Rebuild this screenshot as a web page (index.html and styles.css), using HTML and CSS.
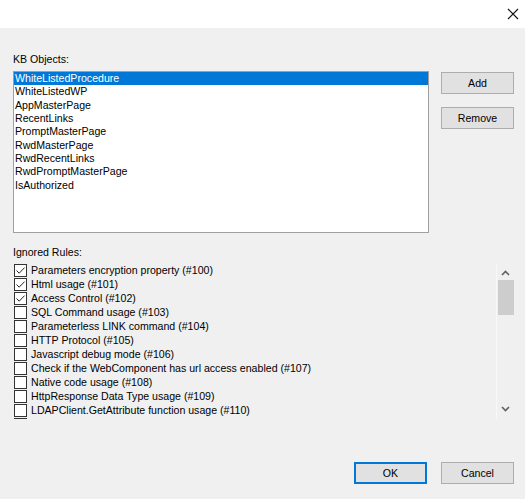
FILE: index.html
```html
<!DOCTYPE html>
<html>
<head>
<meta charset="utf-8">
<link rel="stylesheet" href="styles.css">
</head>
<body>
<div class="window">
  <div class="titlebar">
    <svg class="close" width="12" height="12" viewBox="0 0 12 12"><path d="M1 1L11 11M11 1L1 11" stroke="#111" stroke-width="1.1" fill="none"/></svg>
  </div>
  <div class="content">
    <div class="label kb-label">KB Objects:</div>
    <div class="kb-row">
      <div class="listbox">
        <div class="item selected">WhiteListedProcedure</div>
        <div class="item">WhiteListedWP</div>
        <div class="item">AppMasterPage</div>
        <div class="item">RecentLinks</div>
        <div class="item">PromptMasterPage</div>
        <div class="item">RwdMasterPage</div>
        <div class="item">RwdRecentLinks</div>
        <div class="item">RwdPromptMasterPage</div>
        <div class="item">IsAuthorized</div>
      </div>
      <div class="side-buttons">
        <button class="btn">Add</button>
        <button class="btn">Remove</button>
      </div>
    </div>
    <div class="label rules-label">Ignored Rules:</div>
    <div class="checklist">
      <div class="rows">
        <div class="row"><span class="cb checked"><svg width="11" height="11" viewBox="0 0 11 11"><path d="M1.5 5.5L4.2 8.2L9.6 2.6" stroke="#222" stroke-width="1" fill="none"/></svg></span><span>Parameters encryption property (#100)</span></div>
        <div class="row"><span class="cb checked"><svg width="11" height="11" viewBox="0 0 11 11"><path d="M1.5 5.5L4.2 8.2L9.6 2.6" stroke="#222" stroke-width="1" fill="none"/></svg></span><span>Html usage (#101)</span></div>
        <div class="row"><span class="cb checked"><svg width="11" height="11" viewBox="0 0 11 11"><path d="M1.5 5.5L4.2 8.2L9.6 2.6" stroke="#222" stroke-width="1" fill="none"/></svg></span><span>Access Control (#102)</span></div>
        <div class="row"><span class="cb"></span><span>SQL Command usage (#103)</span></div>
        <div class="row"><span class="cb"></span><span>Parameterless LINK command (#104)</span></div>
        <div class="row"><span class="cb"></span><span>HTTP Protocol (#105)</span></div>
        <div class="row"><span class="cb"></span><span>Javascript debug mode (#106)</span></div>
        <div class="row"><span class="cb"></span><span>Check if the WebComponent has url access enabled (#107)</span></div>
        <div class="row"><span class="cb"></span><span>Native code usage (#108)</span></div>
        <div class="row"><span class="cb"></span><span>HttpResponse Data Type usage (#109)</span></div>
        <div class="row"><span class="cb"></span><span>LDAPClient.GetAttribute function usage (#110)</span></div>
        <div class="row"><span class="cb"></span><span>&nbsp;</span></div>
      </div>
      <div class="scrollbar">
        <svg class="arrow" width="9" height="6" viewBox="0 0 9 6"><path d="M1 5L4.5 1.5L8 5" stroke="#606060" stroke-width="1.6" fill="none"/></svg>
        <div class="track"><div class="thumb"></div></div>
        <svg class="arrow" width="9" height="6" viewBox="0 0 9 6"><path d="M1 1L4.5 4.5L8 1" stroke="#606060" stroke-width="1.6" fill="none"/></svg>
      </div>
    </div>
    <div class="footer">
      <button class="btn default">OK</button>
      <button class="btn">Cancel</button>
    </div>
  </div>
</div>
</body>
</html>
```

FILE: styles.css
```css
* { box-sizing: border-box; }
html, body {
  margin: 0;
  padding: 0;
  background: #f0f0f0;
}
body {
  font-family: "Liberation Sans", Arial, sans-serif;
  font-size: 10.6px;
  color: #000;
  width: 525px;
  height: 499px;
  overflow: hidden;
}
.window {
  display: flex;
  flex-direction: column;
}
.titlebar {
  height: 28px;
  background: #fff;
  display: flex;
  justify-content: flex-end;
  align-items: center;
  padding-right: 6px;
}
.close { display: block; margin-top: 0; }
.content {
  padding: 0 11px 0 13px;
  display: flex;
  flex-direction: column;
}
.label {
  height: 13px;
  line-height: 13px;
  white-space: nowrap;
}
.kb-label { margin-top: 25px; margin-bottom: 5px; }
.kb-row {
  display: flex;
  align-items: flex-start;
}
.listbox {
  width: 416px;
  height: 162px;
  background: #fff;
  border: 1px solid #a0a0a0;
  padding: 0;
}
.item {
  height: 13.33px;
  line-height: 13.33px;
  padding-left: 1px;
  white-space: nowrap;
}
.item.selected {
  background: #0078d7;
  color: #fff;
}
.side-buttons {
  margin-left: 12px;
  padding-top: 1px;
  display: flex;
  flex-direction: column;
  gap: 13px;
}
.btn {
  width: 73px;
  height: 22px;
  background: #e1e1e1;
  border: 1px solid #adadad;
  font-family: "Liberation Sans", Arial, sans-serif;
  font-size: 10.6px;
  color: #000;
  padding: 0;
  margin: 0;
}
.btn.default {
  border: 2px solid #0078d7;
}
.rules-label { margin-top: 13px; margin-bottom: 4px; }
.checklist {
  height: 156px;
  display: flex;
  overflow: hidden;
}
.rows {
  flex: 1;
  padding-top: 1px;
  padding-left: 1px;
  overflow: hidden;
}
.row {
  height: 14px;
  display: flex;
  align-items: flex-start;
  white-space: nowrap;
}
.row span:last-child {
  line-height: 13px;
  margin-left: 4px;
}
.cb {
  width: 13px;
  height: 13px;
  flex: none;
  border: 1px solid #333;
  background: #fff;
  display: flex;
  align-items: center;
  justify-content: center;
}
.cb svg { display: block; }
.scrollbar {
  width: 18px;
  height: 156px;
  flex: none;
  border-left: 1px solid #f8f8f8;
  display: flex;
  flex-direction: column;
  align-items: center;
}
.arrow { display: block; margin: 7px 0 4px; flex: none; }
.scrollbar .arrow:last-child { margin: 4px 0 7px; }
.track {
  flex: 1;
  width: 100%;
  padding-top: 0;
}
.thumb {
  width: 16px;
  height: 35px;
  margin: 0 auto;
  background: #cdcdcd;
}
.footer {
  margin-top: 43px;
  display: flex;
  justify-content: flex-end;
  gap: 14px;
}
```
